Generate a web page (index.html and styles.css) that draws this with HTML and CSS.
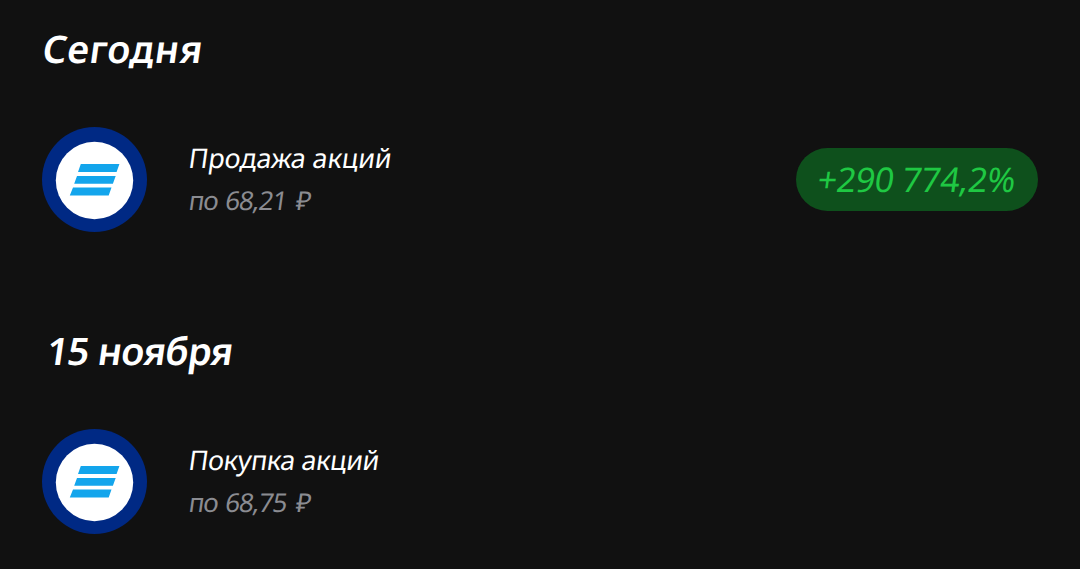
FILE: index.html
```
<!DOCTYPE html>
<html lang="ru">
<head>
    <meta charset="UTF-8">
    <meta name="viewport" content="width=device-width, initial-scale=1.0">
    <title>Операции</title>
    <link rel="stylesheet" href="styles.css">
</head>
<body>
    <main class="history">
        <section class="day">
            <h2 class="date"><span class="slant today">Сегодня</span></h2>
            <div class="operation">
                <svg class="logo" viewBox="0 0 105 105">
                    <circle cx="52.5" cy="52.5" r="52.5" fill="#002984"/>
                    <circle cx="52.5" cy="53.5" r="38.7" fill="#fff"/>
                    <path d="M38.8 37h38.6l-2.8 8H36zM35 48.9h38.7l-2.8 7.8H32.2zM31 60.5h38.5l-2.8 8H27.8z" fill="#13a5ec"/>
                </svg>
                <div class="info">
                    <div class="name"><span class="slant sale">Продажа акций</span></div>
                    <div class="price"><span class="slant">по 68,21 <span class="ruble">₽</span></span></div>
                </div>
                <div class="profit"><span class="slant">+290 774,2%</span></div>
            </div>
        </section>
        <section class="day">
            <h2 class="date"><span class="slant november">15 ноября</span></h2>
            <div class="operation">
                <svg class="logo" viewBox="0 0 105 105">
                    <circle cx="52.5" cy="52.5" r="52.5" fill="#002984"/>
                    <circle cx="52.5" cy="53.5" r="38.7" fill="#fff"/>
                    <path d="M38.8 37h38.6l-2.8 8H36zM35 48.9h38.7l-2.8 7.8H32.2zM31 60.5h38.5l-2.8 8H27.8z" fill="#13a5ec"/>
                </svg>
                <div class="info">
                    <div class="name"><span class="slant purchase">Покупка акций</span></div>
                    <div class="price"><span class="slant">по 68,75 <span class="ruble">₽</span></span></div>
                </div>
            </div>
        </section>
    </main>
</body>
</html>
```
FILE: styles.css
```
* {
    box-sizing: border-box;
}

body {
    margin: 0;
    background-color: #111;
    color: #fff;
    font-family: "Noto Sans", "Open Sans", sans-serif;
}

.history {
    padding: 22px 42px 0;
}

.day + .day {
    margin-top: 92px;
}

.slant {
    display: inline-block;
    transform: skewX(-8deg);
}

.date {
    margin: 0 0 53px;
    height: 52px;
    font-size: 38px;
    line-height: 52px;
    font-weight: 600;
    white-space: nowrap;
}

.today {
    margin-left: 1px;
    letter-spacing: 0.5px;
}

.november {
    margin-left: 5px;
    letter-spacing: -0.7px;
}

.operation {
    display: flex;
    align-items: center;
    height: 105px;
}

.logo {
    width: 105px;
    height: 105px;
    flex: none;
}

.info {
    flex: 1;
    margin-left: 42px;
    white-space: nowrap;
}

.name {
    font-size: 27px;
    line-height: 42px;
}

.sale {
    letter-spacing: -0.1px;
}

.purchase {
    letter-spacing: -0.4px;
}

.price {
    color: #8b8c91;
    font-size: 26px;
    line-height: 43px;
    letter-spacing: -1.1px;
    word-spacing: 2px;
}

.ruble {
    margin-left: 2px;
}

.profit {
    width: 242px;
    height: 63px;
    border-radius: 32px;
    background-color: #0e501c;
    color: #1fc843;
    font-size: 34px;
    line-height: 62px;
    letter-spacing: -0.4px;
    text-align: center;
    white-space: nowrap;
}
```
